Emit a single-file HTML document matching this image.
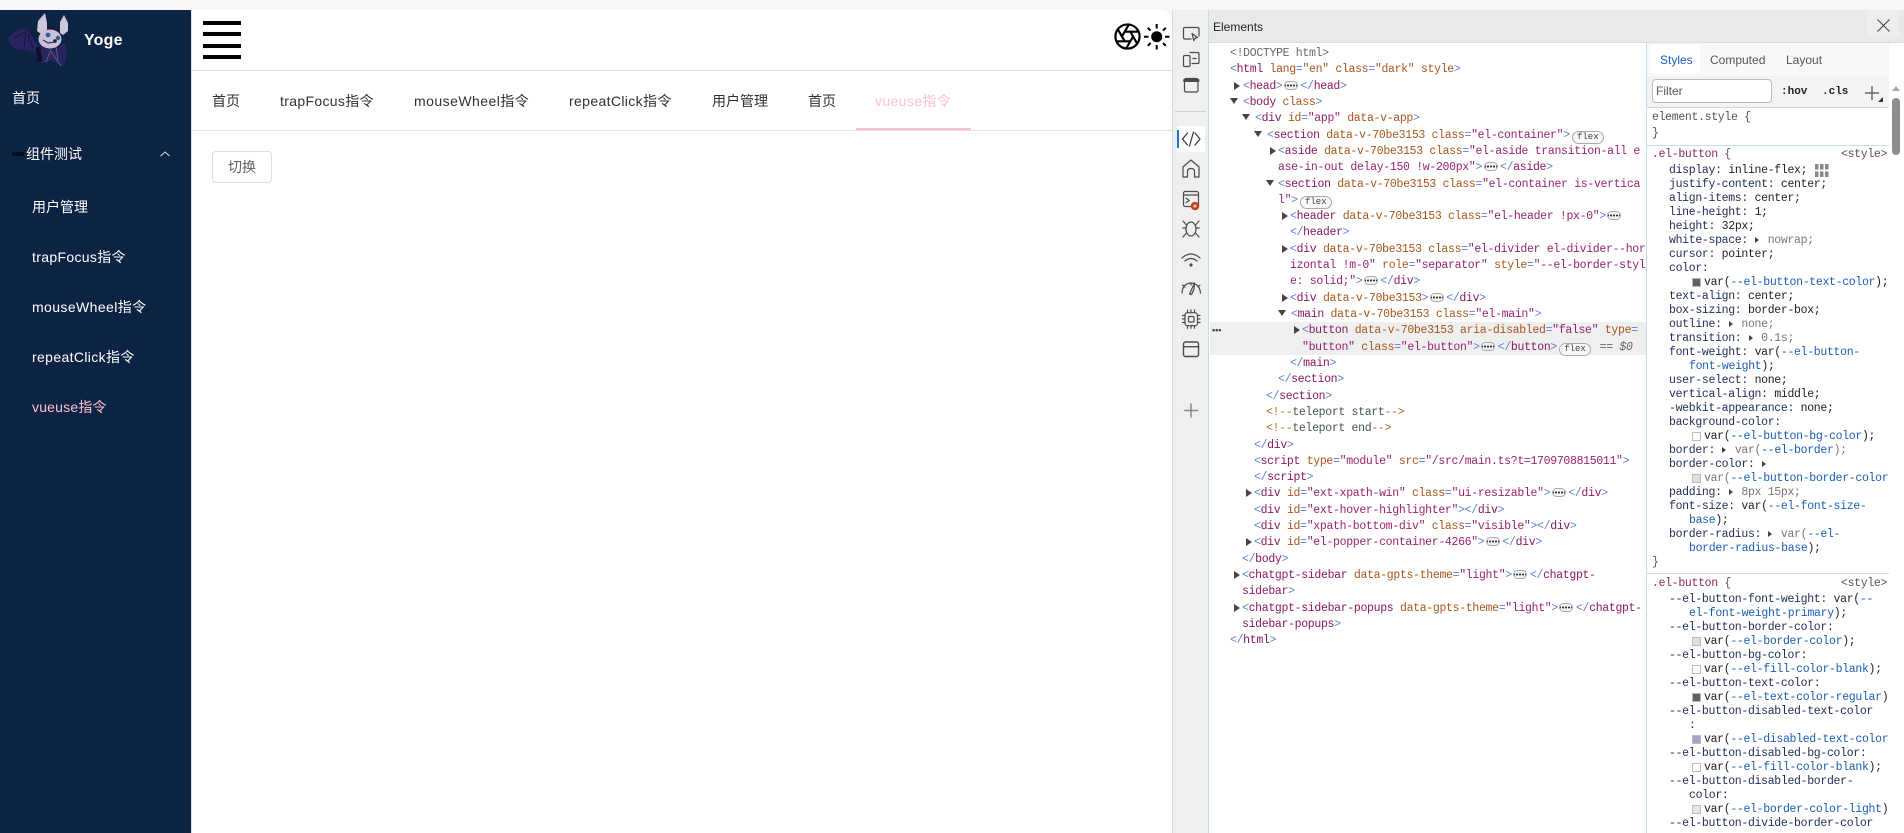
<!DOCTYPE html>
<html lang="zh"><head><meta charset="utf-8"><title>Yoge</title>
<style>
*{box-sizing:border-box}
html,body{margin:0;padding:0;width:1904px;height:833px;overflow:hidden;background:#f7f7f7;font-family:"Liberation Sans","Noto Sans CJK SC",sans-serif}
.abs,.s,.l,.m,.tb{position:absolute;white-space:pre}
.s{color:#fff;font-size:14px;line-height:20px}
.tb{color:#303133;font-size:14px;line-height:20px;top:91px}
.l,.m{font-family:"Liberation Mono","DejaVu Sans Mono",monospace;font-size:11.5px;line-height:16px;letter-spacing:-.32px;transform:translateY(1px)}
.l{color:#222}
.b{color:#5b7fd9}.t{color:#8a1a5c}.a{color:#a9561c}.v{color:#99246e}.c{color:#b5651d}.d{color:#3f5a45}
.m{color:#1f2d57}.k{color:#222}.p{color:#1a5fb4}.g{color:#666}.sel{color:#8a2a5a}
.e{display:inline-block;width:14px;height:9px;border:1px solid #aaa;border-radius:5px;background:#f3f3f3 radial-gradient(circle,#333 .9px,transparent 1.2px) center/3px 3px repeat-x;vertical-align:-1px;margin:0 2.500px 0 1.500px}
.f{display:inline-block;height:13px;width:32px;border:1px solid #aaa;border-radius:7px;font:9px/11px "Liberation Mono",monospace;letter-spacing:0;color:#444;text-align:center;vertical-align:-1px;background:#f8f8f8;margin:0 2px}
.ar,.ad{position:absolute;width:0;height:0}
.ar{border-left:6px solid #444;border-top:4px solid transparent;border-bottom:4px solid transparent}
.ad{border-top:6px solid #444;border-left:4px solid transparent;border-right:4px solid transparent;margin-top:-1px}
.ms{position:absolute;width:4px;height:0;border-left:4px solid #444;border-top:3px solid transparent;border-bottom:3px solid transparent}
.sw{position:absolute;left:1692px;width:9px;height:9px;border:1px solid #bbb;background:#fff}
svg{position:absolute;overflow:visible}
.ic{fill:none;stroke:#4a4a50;stroke-width:1.200;stroke-linecap:round;stroke-linejoin:round}
</style></head><body>

<!-- page -->
<div class="abs" style="left:0;top:10px;width:191px;height:823px;background:#0c2344"></div>
<div class="abs" style="left:191px;top:10px;width:981px;height:823px;background:#fff;border-top-right-radius:12px;border-left:1px solid #dcdfe6"></div>
<div class="abs" style="left:192px;top:70px;width:980px;height:1px;background:#dedfe8"></div>
<div class="abs" style="left:192px;top:130px;width:980px;height:1px;background:#dedfe8"></div>

<!-- logo -->
<svg style="left:0;top:0" width="80" height="80" viewBox="0 0 80 80">
<path d="M8 38 16 31 26 28 29 33 33 38 38 46 37 52 27 50 19 50 11 46Z" fill="#2b2462"/>
<path d="M13 39 25 32M26 29 24 49M28 34 33 49" stroke="#17153a" fill="none"/>
<path d="M33 46 47 46 54 50 65 43 67 55 63 67 52 60 44 63 39 63 36 56Z" fill="#2b2462"/>
<path d="M38 47 40 62" stroke="#100e2c" stroke-width="5" fill="none"/>
<path d="M50 50 61 66M56 47 58 60M50 52 46 62" stroke="#6a6778" fill="none" stroke-width=".800"/>
<path d="M54 28 62 31 63 37 58 41 55 36Z M42 30 50 26 58 30 55 34Z" fill="#1b1740"/>
<path d="M37 31 38 21 45 13 47 23 47 32 41 34Z" fill="#cdc5da"/>
<path d="M60 33 60 22 64 15 68 23 68 31 63 35Z" fill="#cdc5da"/>
<ellipse cx="50" cy="39" rx="11.500" ry="9.500" fill="#c9bfd8"/>
<circle cx="48" cy="35" r="2.400" fill="#2f5f9a"/><circle cx="58" cy="38" r="2.200" fill="#2f5f9a"/>
<path d="M43 40 48 43 55 42" stroke="#1b1740" stroke-width="1" fill="none"/>
<circle cx="55" cy="41" r="1.800" fill="#1b1740"/>
</svg>
<div class="abs" style="left:84px;top:31px;color:#fff;font-size:16px;font-weight:bold;line-height:20px;letter-spacing:.2px">Yoge</div>

<!-- sidebar -->
<div class="s" style="left:12px;top:88px">首页</div>
<div class="abs" style="left:12px;top:152px;width:12px;height:4px;background:#050a18;opacity:.8"></div>
<div class="s" style="left:26px;top:144px">组件测试</div>
<svg style="left:160px;top:151px" width="10" height="6"><path d="M.5 5 5 1 9.500 5" fill="none" stroke="#dfe3ea" stroke-width="1"/></svg>
<div class="s" style="left:32px;top:197px">用户管理</div>
<div class="s" style="left:32px;top:247px;letter-spacing:.33px">trapFocus指令</div>
<div class="s" style="left:32px;top:297px;letter-spacing:.4px">mouseWheel指令</div>
<div class="s" style="left:32px;top:347px;letter-spacing:.36px">repeatClick指令</div>
<div class="s" style="left:32px;top:397px;color:#ffc0cb;letter-spacing:.2px">vueuse指令</div>

<!-- header -->
<div class="abs" style="left:203px;top:21px;width:38px;height:4px;background:#000"></div>
<div class="abs" style="left:203px;top:32px;width:38px;height:4px;background:#000"></div>
<div class="abs" style="left:203px;top:43.500px;width:38px;height:4px;background:#000"></div>
<div class="abs" style="left:203px;top:55px;width:38px;height:4px;background:#000"></div>
<svg style="left:1112.600px;top:22.300px" width="29" height="29" viewBox="0 0 24 24" fill="none" stroke="#000" stroke-width="1.800" stroke-linecap="round" stroke-linejoin="round">
<circle cx="12" cy="12" r="10"/><path d="m14.310 8 5.740 9.940M9.690 8h11.480M7.380 12l5.740-9.940M9.690 16 3.950 6.060M14.310 16H2.830M16.620 12l-5.740 9.940"/>
</svg>
<svg style="left:1143px;top:23px" width="28" height="28" viewBox="0 0 28 28" stroke="#000" stroke-width="2">
<circle cx="13.700" cy="13.700" r="5.500" fill="#000" stroke="none"/><path d="M13.700 1V5.500M13.700 22V26.500M1 13.700H5.500M22 13.700H26.500M4.800 4.800 7.600 7.600M20 20 22.800 22.800M4.800 22.800 7.600 20M20 7.600 22.800 4.800"/>
</svg>

<!-- tabs -->
<div class="tb" style="left:212px">首页</div>
<div class="tb" style="left:280px;letter-spacing:.33px">trapFocus指令</div>
<div class="tb" style="left:414px;letter-spacing:.46px">mouseWheel指令</div>
<div class="tb" style="left:569px;letter-spacing:.36px">repeatClick指令</div>
<div class="tb" style="left:712px">用户管理</div>
<div class="tb" style="left:808px">首页</div>
<div class="tb" style="left:875px;color:#ffc0cb;letter-spacing:.37px">vueuse指令</div>
<div class="abs" style="left:856px;top:128px;width:115px;height:2px;background:#ffc0cb"></div>
<div class="abs" style="left:212px;top:151px;width:60px;height:32px;border:1px solid #dcdfe6;border-radius:4px;background:#fff;color:#606266;font-size:14px;line-height:30px;text-align:center">切换</div>

<!-- devtools chrome -->
<div class="abs" style="left:1172px;top:10px;width:36px;height:823px;background:#efefef"></div>
<div class="abs" style="left:1172px;top:10px;width:1px;height:823px;background:#dcdcdc"></div>
<div class="abs" style="left:1208px;top:10px;width:696px;height:823px;background:#fff"></div>
<div class="abs" style="left:1208px;top:10px;width:1px;height:823px;background:#c8d9f3"></div>
<div class="abs" style="left:1209px;top:10px;width:695px;height:33px;background:#e9e9e9;border-bottom:1px solid #dcdcdc"></div>
<div class="abs" style="left:1213px;top:18px;font-size:12px;line-height:18px;color:#222;font-family:'Liberation Sans',sans-serif">Elements</div>
<div class="abs" style="left:1867px;top:10px;width:32px;height:27px;background:#eee"></div>
<svg style="left:1877px;top:19px" width="13" height="13"><path d="M.5.5 12.500 12.500M12.500.5.5 12.500" stroke="#444" stroke-width="1" fill="none"/></svg>

<!-- side icons -->
<svg style="left:1172px;top:20px" width="36" height="410" viewBox="0 0 36 410">
<rect x="5" y="106" width="28" height="26" fill="#fff" stroke="none"/><rect x="5" y="110" width="2" height="18" fill="#1a73d9"/>
<g class="ic">
<path d="M27 16V9Q27 7.500 25.500 7.500H13Q11.500 7.500 11.500 9V17.500Q11.500 19 13 19H19"/><path d="M20 13.500 25.500 17.500 23 18.300 21.800 20.700Z"/>
<path d="M18 32.500H25.500Q27 32.500 27 34V42Q27 43.500 25.500 43.500H20"/><rect x="11.500" y="35.500" width="6.500" height="11" rx="1.300"/><path d="M21 38.500H24"/>
<rect x="12.500" y="58.500" width="13.500" height="13.500" rx="1.500"/><path d="M12.500 60.500H26" stroke-width="3"/>
<path d="M15.500 113 10.500 119 15.500 125M23 113 28 119 23 125M21.500 112 17.500 126" stroke="#333"/>
<path d="M11 147 19 140 27 147V157H22.500V151.500Q22.500 148.500 19 148.500 15.500 148.500 15.500 151.500V157H11Z"/>
<rect x="11.500" y="171.500" width="15" height="15" rx="1.800"/><path d="M11.500 175H26.500M14 178.300 17.300 180.500 14 182.700"/>
<ellipse cx="19" cy="209" rx="5" ry="7"/><path d="M14 208H10.800M24 208H27.200M14.500 205 11 201M23.500 205 27 201M14.500 213 11 217M23.500 213 27 217"/>
<path d="M10 238Q19 230 28 238M13 241Q19 236 25 241"/><circle cx="19" cy="245" r="1" fill="#4a4a50"/>
<path d="M10 273Q10.500 263.500 19 263 27.500 263.500 28.500 273M13 267 10.500 265M26 267 28 265M19 263V265"/><path d="M17.500 274 22.500 263 22 269 19.500 274.500Z"/>
<rect x="13" y="292.700" width="12.500" height="13" rx="2.500"/><rect x="16.500" y="296.500" width="5.500" height="5.500" rx="1"/><path d="M15.500 292.700V290M19 292.700V290M22.500 292.700V290M15.500 305.700V308.300M19 305.700V308.300M22.500 305.700V308.300M13 295.500H10.500M13 299H10.500M13 302.500H10.500M25.500 295.500H28M25.500 299H28M25.500 302.500H28"/>
<rect x="11.500" y="322" width="15" height="14.500" rx="2" stroke-width="1.400"/><path d="M11.500 326.700H26.500" stroke-width="1.400"/>
<path d="M19 384V397M12.500 390.500H25.500" stroke="#888" stroke-width="1.500"/>
</g>
<circle cx="23" cy="186" r="4.300" fill="#c2431a"/><circle cx="23" cy="186" r="1.500" fill="#f3d0c0"/>
</svg>
<div class="abs" style="left:1175px;top:111px;width:31px;height:1px;background:#cfcfcf"></div>

<!-- elements highlight -->
<div class="abs" style="left:1210px;top:322px;width:436px;height:33px;background:#efefef"></div>
<div class="abs" style="left:1212px;top:323px;font:bold 9px/14px 'Liberation Sans',sans-serif;color:#444;letter-spacing:0">•••</div>

<!-- elements tree -->
<div class="l" style="left:1230px;top:45px"><span class="g">&lt;!DOCTYPE html&gt;</span></div>
<div class="l" style="left:1230px;top:61px"><span class="b">&lt;</span><span class="t">html</span> <span class="a">lang</span><span class="b">=</span><span class="a">"en"</span> <span class="a">class</span><span class="b">=</span><span class="a">"dark"</span> <span class="a">style</span><span class="b">&gt;</span></div>
<i class="ar" style="left:1234px;top:82px"></i><div class="l" style="left:1243px;top:78px"><span class="b">&lt;</span><span class="t">head</span><span class="b">&gt;</span><span class="e"></span><span class="b">&lt;/</span><span class="t">head</span><span class="b">&gt;</span></div>
<i class="ad" style="left:1230px;top:99px"></i><div class="l" style="left:1243px;top:94px"><span class="b">&lt;</span><span class="t">body</span> <span class="a">class</span><span class="b">&gt;</span></div>
<i class="ad" style="left:1242px;top:115px"></i><div class="l" style="left:1255px;top:110px"><span class="b">&lt;</span><span class="t">div</span> <span class="a">id</span><span class="b">=</span><span class="v">"app"</span> <span class="a">data-v-app</span><span class="b">&gt;</span></div>
<i class="ad" style="left:1254px;top:132px"></i><div class="l" style="left:1267px;top:127px"><span class="b">&lt;</span><span class="t">section</span> <span class="a">data-v-70be3153</span> <span class="a">class</span><span class="b">=</span><span class="v">"el-container"</span><span class="b">&gt;</span><span class="f">flex</span></div>
<i class="ar" style="left:1270px;top:147px"></i><div class="l" style="left:1278px;top:143px"><span class="b">&lt;</span><span class="t">aside</span> <span class="a">data-v-70be3153</span> <span class="a">class</span><span class="b">=</span><span class="v">"el-aside transition-all e</span></div>
<div class="l" style="left:1278px;top:159px"><span class="v">ase-in-out delay-150 !w-200px"</span><span class="b">&gt;</span><span class="e"></span><span class="b">&lt;/</span><span class="t">aside</span><span class="b">&gt;</span></div>
<i class="ad" style="left:1266px;top:181px"></i><div class="l" style="left:1278px;top:176px"><span class="b">&lt;</span><span class="t">section</span> <span class="a">data-v-70be3153</span> <span class="a">class</span><span class="b">=</span><span class="v">"el-container is-vertica</span></div>
<div class="l" style="left:1278px;top:192px"><span class="v">l"</span><span class="b">&gt;</span><span class="f">flex</span></div>
<i class="ar" style="left:1282px;top:212px"></i><div class="l" style="left:1290px;top:208px"><span class="b">&lt;</span><span class="t">header</span> <span class="a">data-v-70be3153</span> <span class="a">class</span><span class="b">=</span><span class="v">"el-header !px-0"</span><span class="b">&gt;</span><span class="e"></span></div>
<div class="l" style="left:1290px;top:224px"><span class="b">&lt;/</span><span class="t">header</span><span class="b">&gt;</span></div>
<i class="ar" style="left:1282px;top:245px"></i><div class="l" style="left:1290px;top:241px"><span class="b">&lt;</span><span class="t">div</span> <span class="a">data-v-70be3153</span> <span class="a">class</span><span class="b">=</span><span class="v">"el-divider el-divider--hor</span></div>
<div class="l" style="left:1290px;top:257px"><span class="v">izontal !m-0"</span> <span class="a">role</span><span class="b">=</span><span class="v">"separator"</span> <span class="a">style</span><span class="b">=</span><span class="v">"--el-border-styl</span></div>
<div class="l" style="left:1290px;top:273px"><span class="v">e: solid;"</span><span class="b">&gt;</span><span class="e"></span><span class="b">&lt;/</span><span class="t">div</span><span class="b">&gt;</span></div>
<i class="ar" style="left:1282px;top:294px"></i><div class="l" style="left:1290px;top:290px"><span class="b">&lt;</span><span class="t">div</span> <span class="a">data-v-70be3153</span><span class="b">&gt;</span><span class="e"></span><span class="b">&lt;/</span><span class="t">div</span><span class="b">&gt;</span></div>
<i class="ad" style="left:1278px;top:311px"></i><div class="l" style="left:1291px;top:306px"><span class="b">&lt;</span><span class="t">main</span> <span class="a">data-v-70be3153</span> <span class="a">class</span><span class="b">=</span><span class="v">"el-main"</span><span class="b">&gt;</span></div>
<i class="ar" style="left:1294px;top:326px"></i><div class="l" style="left:1302px;top:322px"><span class="b">&lt;</span><span class="t">button</span> <span class="a">data-v-70be3153</span> <span class="a">aria-disabled</span><span class="b">=</span><span class="v">"false"</span> <span class="a">type</span><span class="b">=</span></div>
<div class="l" style="left:1302px;top:339px"><span class="v">"button"</span> <span class="a">class</span><span class="b">=</span><span class="v">"el-button"</span><span class="b">&gt;</span><span class="e"></span><span class="b">&lt;/</span><span class="t">button</span><span class="b">&gt;</span><span class="f">flex</span> <span class="g">== <em>$0</em></span></div>
<div class="l" style="left:1290px;top:355px"><span class="b">&lt;/</span><span class="t">main</span><span class="b">&gt;</span></div>
<div class="l" style="left:1278px;top:371px"><span class="b">&lt;/</span><span class="t">section</span><span class="b">&gt;</span></div>
<div class="l" style="left:1266px;top:388px"><span class="b">&lt;/</span><span class="t">section</span><span class="b">&gt;</span></div>
<div class="l" style="left:1266px;top:404px"><span class="c">&lt;!--</span><span class="d">teleport start</span><span class="c">--&gt;</span></div>
<div class="l" style="left:1266px;top:420px"><span class="c">&lt;!--</span><span class="d">teleport end</span><span class="c">--&gt;</span></div>
<div class="l" style="left:1254px;top:437px"><span class="b">&lt;/</span><span class="t">div</span><span class="b">&gt;</span></div>
<div class="l" style="left:1254px;top:453px"><span class="b">&lt;</span><span class="t">script</span> <span class="a">type</span><span class="b">=</span><span class="v">"module"</span> <span class="a">src</span><span class="b">=</span><span class="v">"/src/main.ts?t=1709708815011"</span><span class="b">&gt;</span></div>
<div class="l" style="left:1254px;top:469px"><span class="b">&lt;/</span><span class="t">script</span><span class="b">&gt;</span></div>
<i class="ar" style="left:1246px;top:489px"></i><div class="l" style="left:1254px;top:485px"><span class="b">&lt;</span><span class="t">div</span> <span class="a">id</span><span class="b">=</span><span class="v">"ext-xpath-win"</span> <span class="a">class</span><span class="b">=</span><span class="v">"ui-resizable"</span><span class="b">&gt;</span><span class="e"></span><span class="b">&lt;/</span><span class="t">div</span><span class="b">&gt;</span></div>
<div class="l" style="left:1254px;top:502px"><span class="b">&lt;</span><span class="t">div</span> <span class="a">id</span><span class="b">=</span><span class="v">"ext-hover-highlighter"</span><span class="b">&gt;&lt;/</span><span class="t">div</span><span class="b">&gt;</span></div>
<div class="l" style="left:1254px;top:518px"><span class="b">&lt;</span><span class="t">div</span> <span class="a">id</span><span class="b">=</span><span class="v">"xpath-bottom-div"</span> <span class="a">class</span><span class="b">=</span><span class="v">"visible"</span><span class="b">&gt;&lt;/</span><span class="t">div</span><span class="b">&gt;</span></div>
<i class="ar" style="left:1246px;top:538px"></i><div class="l" style="left:1254px;top:534px"><span class="b">&lt;</span><span class="t">div</span> <span class="a">id</span><span class="b">=</span><span class="v">"el-popper-container-4266"</span><span class="b">&gt;</span><span class="e"></span><span class="b">&lt;/</span><span class="t">div</span><span class="b">&gt;</span></div>
<div class="l" style="left:1242px;top:551px"><span class="b">&lt;/</span><span class="t">body</span><span class="b">&gt;</span></div>
<i class="ar" style="left:1234px;top:571px"></i><div class="l" style="left:1242px;top:567px"><span class="b">&lt;</span><span class="t">chatgpt-sidebar</span> <span class="a">data-gpts-theme</span><span class="b">=</span><span class="v">"light"</span><span class="b">&gt;</span><span class="e"></span><span class="b">&lt;/</span><span class="t">chatgpt-</span></div>
<div class="l" style="left:1242px;top:583px"><span class="t">sidebar</span><span class="b">&gt;</span></div>
<i class="ar" style="left:1234px;top:604px"></i><div class="l" style="left:1242px;top:600px"><span class="b">&lt;</span><span class="t">chatgpt-sidebar-popups</span> <span class="a">data-gpts-theme</span><span class="b">=</span><span class="v">"light"</span><span class="b">&gt;</span><span class="e"></span><span class="b">&lt;/</span><span class="t">chatgpt-</span></div>
<div class="l" style="left:1242px;top:616px"><span class="t">sidebar-popups</span><span class="b">&gt;</span></div>
<div class="l" style="left:1230px;top:632px"><span class="b">&lt;/</span><span class="t">html</span><span class="b">&gt;</span></div>

<!-- styles pane -->
<div class="abs" style="left:1646px;top:43px;width:1px;height:790px;background:#c8d9f3"></div>
<div class="abs" style="left:1647px;top:43px;width:242px;height:33px;background:#f8f8f8"></div>
<div class="abs" style="left:1650px;top:45px;width:50px;height:28px;background:#fff"></div>
<div class="abs" style="left:1660px;top:52px;font-size:12px;line-height:16px;color:#1a5fb4">Styles</div>
<div class="abs" style="left:1710px;top:52px;font-size:12px;line-height:16px;color:#555">Computed</div>
<div class="abs" style="left:1786px;top:52px;font-size:12px;line-height:16px;color:#555">Layout</div>
<div class="abs" style="left:1647px;top:76px;width:242px;height:32px;background:#f3f3f3;border-bottom:1px solid #c8d9f3"></div>
<div class="abs" style="left:1652px;top:79px;width:120px;height:24px;background:#fff;border:1px solid #bbb;border-radius:4px;font-size:12px;line-height:23px;padding-left:3px;color:#555">Filter</div>
<div class="abs" style="left:1781px;top:84px;font:bold 11px/16px 'Liberation Mono',monospace;color:#222">:hov</div>
<div class="abs" style="left:1822px;top:84px;font:bold 11px/16px 'Liberation Mono',monospace;color:#222">.cls</div>
<svg style="left:1864px;top:85px" width="20" height="17"><path d="M8 1V15M1 8H15" stroke="#666" stroke-width="1.500"/><path d="M19 12V17H14Z" fill="#333"/></svg>
<svg style="left:1891px;top:85px" width="11" height="6"><path d="M1 6 5 1 9 6Z" fill="#aaa"/></svg>
<div class="abs" style="left:1892px;top:98px;width:8px;height:57px;background:#8e8e92;border-radius:4px"></div>
<div class="abs" style="left:1647px;top:145px;width:242px;height:1px;background:#c8d9f3"></div>
<div class="abs" style="left:1647px;top:573px;width:242px;height:1px;background:#c8d9f3"></div>

<div class="m g" style="left:1652px;top:109px;color:#555">element.style {</div>
<div class="m g" style="left:1652px;top:125px;color:#555">}</div>
<div class="m sel" style="left:1652px;top:146px;color:#8a2a5a">.el-button <span style="color:#555">{</span></div>
<div class="m" style="left:1841px;top:146px;color:#555">&lt;style&gt;</div>
<div class="m" style="left:1669px;top:162px">display: <span class="k">inline-flex;</span></div>
<svg style="left:1815px;top:164px" width="14" height="13" fill="#888"><rect x="0" y="0" width="3.500" height="5.500"/><rect x="5" y="0" width="3.500" height="5.500"/><rect x="10" y="0" width="3.500" height="5.500"/><rect x="0" y="7.500" width="3.500" height="5.500"/><rect x="5" y="7.500" width="3.500" height="5.500"/><rect x="10" y="7.500" width="3.500" height="5.500"/></svg>
<div class="m" style="left:1669px;top:176px">justify-content: <span class="k">center;</span></div>
<div class="m" style="left:1669px;top:190px">align-items: <span class="k">center;</span></div>
<div class="m" style="left:1669px;top:204px">line-height: <span class="k">1;</span></div>
<div class="m" style="left:1669px;top:218px">height: <span class="k">32px;</span></div>
<div class="m" style="left:1669px;top:232px">white-space: <span style="color:#777">  nowrap;</span></div><i class="ms" style="left:1755px;top:237px"></i>
<div class="m" style="left:1669px;top:246px">cursor: <span class="k">pointer;</span></div>
<div class="m" style="left:1669px;top:260px">color:</div>
<i class="sw" style="top:278px;background:#606266"></i><div class="m k" style="left:1704px;top:274px">var(<span class="p">--el-button-text-color</span>);</div>
<div class="m" style="left:1669px;top:288px">text-align: <span class="k">center;</span></div>
<div class="m" style="left:1669px;top:302px">box-sizing: <span class="k">border-box;</span></div>
<div class="m" style="left:1669px;top:316px">outline: <span style="color:#777">  none;</span></div><i class="ms" style="left:1729px;top:321px"></i>
<div class="m" style="left:1669px;top:330px">transition: <span style="color:#777">  0.1s;</span></div><i class="ms" style="left:1749px;top:335px"></i>
<div class="m" style="left:1669px;top:344px">font-weight: <span class="k">var(</span><span class="p">--el-button-</span></div>
<div class="m p" style="left:1689px;top:358px;color:#1a5fb4">font-weight<span class="k">);</span></div>
<div class="m" style="left:1669px;top:372px">user-select: <span class="k">none;</span></div>
<div class="m" style="left:1669px;top:386px">vertical-align: <span class="k">middle;</span></div>
<div class="m" style="left:1669px;top:400px">-webkit-appearance: <span class="k">none;</span></div>
<div class="m" style="left:1669px;top:414px">background-color:</div>
<i class="sw" style="top:432px"></i><div class="m k" style="left:1704px;top:428px">var(<span class="p">--el-button-bg-color</span>);</div>
<div class="m" style="left:1669px;top:442px">border: <span style="color:#777">  var(</span><span class="p">--el-border</span><span style="color:#777">);</span></div><i class="ms" style="left:1722px;top:447px"></i>
<div class="m" style="left:1669px;top:456px">border-color:</div><i class="ms" style="left:1762px;top:461px"></i>
<i class="sw" style="top:474px;background:#dcdfe6"></i><div class="m" style="left:1704px;top:470px;color:#777">var(<span class="p">--el-button-border-color</span></div>
<div class="m" style="left:1669px;top:484px">padding: <span style="color:#777">  8px 15px;</span></div><i class="ms" style="left:1729px;top:489px"></i>
<div class="m" style="left:1669px;top:498px">font-size: <span class="k">var(</span><span class="p">--el-font-size-</span></div>
<div class="m" style="left:1689px;top:512px;color:#1a5fb4">base<span class="k">);</span></div>
<div class="m" style="left:1669px;top:526px">border-radius: <span style="color:#777">  var(</span><span class="p">--el-</span></div><i class="ms" style="left:1768px;top:531px"></i>
<div class="m" style="left:1689px;top:540px;color:#1a5fb4">border-radius-base<span class="k">);</span></div>
<div class="m" style="left:1652px;top:554px;color:#555">}</div>
<div class="m" style="left:1652px;top:575px;color:#8a2a5a">.el-button <span style="color:#555">{</span></div>
<div class="m" style="left:1841px;top:575px;color:#555">&lt;style&gt;</div>
<div class="m" style="left:1669px;top:591px">--el-button-font-weight: <span class="k">var(</span><span class="p">--</span></div>
<div class="m" style="left:1689px;top:605px;color:#1a5fb4">el-font-weight-primary<span class="k">);</span></div>
<div class="m" style="left:1669px;top:619px">--el-button-border-color:</div>
<i class="sw" style="top:637px;background:#dcdfe6"></i><div class="m k" style="left:1704px;top:633px">var(<span class="p">--el-border-color</span>);</div>
<div class="m" style="left:1669px;top:647px">--el-button-bg-color:</div>
<i class="sw" style="top:665px"></i><div class="m k" style="left:1704px;top:661px">var(<span class="p">--el-fill-color-blank</span>);</div>
<div class="m" style="left:1669px;top:675px">--el-button-text-color:</div>
<i class="sw" style="top:693px;background:#606266"></i><div class="m k" style="left:1704px;top:689px">var(<span class="p">--el-text-color-regular</span>)</div>
<div class="m" style="left:1669px;top:703px">--el-button-disabled-text-color</div>
<div class="m" style="left:1689px;top:717px">:</div>
<i class="sw" style="top:735px;background:#a8a0c8"></i><div class="m k" style="left:1704px;top:731px">var(<span class="p">--el-disabled-text-color</span></div>
<div class="m" style="left:1669px;top:745px">--el-button-disabled-bg-color:</div>
<i class="sw" style="top:763px"></i><div class="m k" style="left:1704px;top:759px">var(<span class="p">--el-fill-color-blank</span>);</div>
<div class="m" style="left:1669px;top:773px">--el-button-disabled-border-</div>
<div class="m" style="left:1689px;top:787px">color:</div>
<i class="sw" style="top:805px;background:#e4e4e4"></i><div class="m k" style="left:1704px;top:801px">var(<span class="p">--el-border-color-light</span>)</div>
<div class="m" style="left:1669px;top:815px">--el-button-divide-border-color</div>
</body></html>
